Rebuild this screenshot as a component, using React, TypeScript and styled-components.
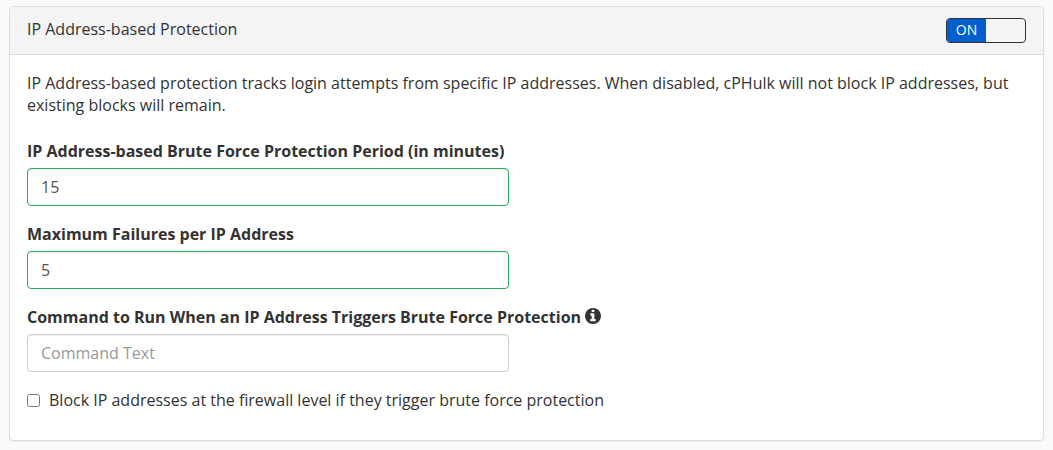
import React, { useState } from "react";
import styled, { createGlobalStyle } from "styled-components";

const GlobalStyle = createGlobalStyle`
  * { box-sizing: border-box; }
  body {
    margin: 0;
    background: #fafafa;
    color: #333;
    font-family: "Open Sans", "Noto Sans", sans-serif;
    font-size: 16px;
    line-height: 22px;
  }
`;

const Page = styled.main`
  padding: 6px 9px 9px;
`;

const Panel = styled.section`
  background: #fff;
  border: 1px solid #ddd;
  border-radius: 4px;
  box-shadow: 0 1px 1px rgba(0, 0, 0, 0.05);
`;

const PanelHeader = styled.header`
  display: flex;
  align-items: flex-start;
  justify-content: space-between;
  padding: 11px 17px;
  background: #f4f4f4;
  border-bottom: 1px solid #ddd;
  border-radius: 3px 3px 0 0;
`;

const PanelTitle = styled.h2`
  margin: 0;
  font-size: 16px;
  font-weight: 400;
`;

const Switch = styled.button`
  display: grid;
  grid-template-columns: 1fr 1fr;
  width: 80px;
  height: 25px;
  padding: 0;
  overflow: hidden;
  background: #f5f5f5;
  border: 1px solid #333;
  border-radius: 4px;
  font-family: inherit;
  font-size: 14px;
  line-height: 22px;
  cursor: pointer;
`;

const SwitchHalf = styled.span<{ $filled?: boolean }>`
  height: 23px;
  background: ${(p) => (p.$filled ? "#005fcf" : "transparent")};
  color: #fff;
  text-align: center;
`;

const PanelBody = styled.div`
  padding: 17px 17px 29px;
`;

const Description = styled.p`
  margin: 0 0 24px;
`;

const Columns = styled.form`
  display: grid;
  grid-template-columns: repeat(2, minmax(0, 1fr));
  column-gap: 35px;
  row-gap: 17px;
`;

const Field = styled.div`
  grid-column: 1;
  display: flex;
  flex-direction: column;
  gap: 6px;
`;

const LabelRow = styled.div`
  display: flex;
  align-items: flex-start;
  gap: 4px;
  white-space: nowrap;
`;

const Label = styled.label`
  font-weight: 700;
`;

const InfoButton = styled.button`
  display: flex;
  padding: 2px 0;
  border: 0;
  background: none;
  color: #333;
  cursor: pointer;
`;

const TextInput = styled.input<{ $valid?: boolean }>`
  width: 100%;
  height: 38px;
  padding: 6px 13px;
  background: #fff;
  border: 1px solid ${(p) => (p.$valid ? "#27ae60" : "#ccc")};
  border-radius: 4px;
  box-shadow: inset 0 1px 1px rgba(0, 0, 0, 0.075);
  color: #555;
  font-family: inherit;
  font-size: 16px;
  line-height: 22px;

  &::placeholder {
    color: #999;
    opacity: 1;
  }
`;

const CheckLabel = styled.label`
  grid-column: 1 / -1;
  display: flex;
  align-items: center;
  gap: 9px;
`;

const Checkbox = styled.input`
  width: 13px;
  height: 13px;
  margin: 0;
`;

function InfoIcon() {
  return (
    <svg width="16" height="16" viewBox="128 128 1536 1536" fill="currentColor" aria-hidden="true">
      <path d="M1152 1376v-160q0-14-9-23t-23-9h-96v-512q0-14-9-23t-23-9h-320q-14 0-23 9t-9 23v160q0 14 9 23t23 9h96v320h-96q-14 0-23 9t-9 23v160q0 14 9 23t23 9h448q14 0 23-9t9-23zm-128-896v-160q0-14-9-23t-23-9h-192q-14 0-23 9t-9 23v160q0 14 9 23t23 9h192q14 0 23-9t9-23zm640 416q0 209-103 385.5t-279.5 279.5-385.5 103-385.5-103-279.5-279.5-103-385.5 103-385.5 279.5-279.5 385.5-103 385.5 103 279.5 279.5 103 385.5z" />
    </svg>
  );
}

export default function App() {
  const [on, setOn] = useState(true);
  const [period, setPeriod] = useState("15");
  const [failures, setFailures] = useState("5");

  return (
    <>
      <GlobalStyle />
      <Page>
        <Panel>
          <PanelHeader>
            <PanelTitle>IP Address-based Protection</PanelTitle>
            <Switch
              type="button"
              role="switch"
              aria-checked={on}
              aria-label="IP Address-based Protection"
              onClick={() => setOn(!on)}
            >
              <SwitchHalf $filled={on}>{on ? "ON" : ""}</SwitchHalf>
              <SwitchHalf />
            </Switch>
          </PanelHeader>
          <PanelBody>
            <Description>
              IP Address-based protection tracks login attempts from specific IP addresses. When
              disabled, cPHulk will not block IP addresses, but existing blocks will remain.
            </Description>
            <Columns>
              <Field>
                <Label htmlFor="period">
                  IP Address-based Brute Force Protection Period (in minutes)
                </Label>
                <TextInput
                  id="period"
                  $valid
                  value={period}
                  onChange={(e) => setPeriod(e.target.value)}
                />
              </Field>
              <Field>
                <Label htmlFor="failures">Maximum Failures per IP Address</Label>
                <TextInput
                  id="failures"
                  $valid
                  value={failures}
                  onChange={(e) => setFailures(e.target.value)}
                />
              </Field>
              <Field>
                <LabelRow>
                  <Label htmlFor="command">
                    Command to Run When an IP Address Triggers Brute Force Protection
                  </Label>
                  <InfoButton type="button" aria-label="More information">
                    <InfoIcon />
                  </InfoButton>
                </LabelRow>
                <TextInput id="command" placeholder="Command Text" />
              </Field>
              <CheckLabel>
                <Checkbox type="checkbox" />
                Block IP addresses at the firewall level if they trigger brute force protection
              </CheckLabel>
            </Columns>
          </PanelBody>
        </Panel>
      </Page>
    </>
  );
}
